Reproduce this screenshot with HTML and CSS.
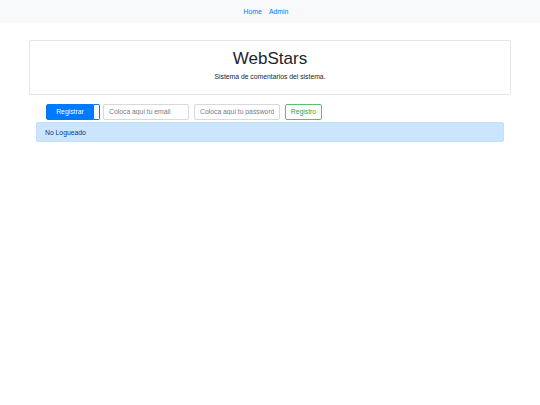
FILE: index.html
```html
<!DOCTYPE html>
<html lang="es">
<head>
<meta charset="utf-8">
<title>WebStars</title>
<link rel="stylesheet" href="styles.css">
</head>
<body>
<nav class="navbar">
  <a class="nav-link" href="#">Home</a>
  <a class="nav-link" href="#">Admin</a>
</nav>
<main class="container">
  <section class="jumbo">
    <h1 class="title">WebStars</h1>
    <p class="lead">Sistema de comentarios del sistema.</p>
  </section>
  <div class="content">
    <form class="reg-form">
      <div class="btn-group">
        <button type="button" class="btn btn-primary">Registrar</button>
        <button type="button" class="btn btn-toggle"></button>
      </div>
      <input class="input" type="text" placeholder="Coloca aqui tu email">
      <input class="input" type="password" placeholder="Coloca aqui tu password">
      <button type="button" class="btn btn-outline-success">Registro</button>
    </form>
    <div class="alert">No Logueado</div>
  </div>
</main>
</body>
</html>
```

FILE: styles.css
```css
* { box-sizing: border-box; }
html, body { margin: 0; padding: 0; }
body {
  font-family: "Liberation Sans", Arial, sans-serif;
  font-size: 6.8px;
  color: #212529;
  background: #fff;
  width: 540px;
  height: 405px;
}
.navbar {
  height: 23px;
  background: #f8f9fa;
  display: flex;
  justify-content: center;
  align-items: center;
  gap: 7px;
  padding-right: 8px;
}
.nav-link {
  color: #007bff;
  text-decoration: none;
  font-size: 6.9px;
}
.container {
  padding: 17px 29px 0 29px;
}
.jumbo {
  border: 1px solid #e6e6e6;
  border-radius: 2px;
  height: 55px;
  text-align: center;
  padding-top: 8px;
}
.title {
  margin: 0;
  font-weight: 400;
  font-size: 17px;
  line-height: 20px;
  color: #212529;
}
.lead {
  margin: 3px 0 0 0;
  font-size: 6.8px;
  line-height: 9px;
}
.content {
  padding: 8px 7px 0 7px;
  width: 482px;
}
.reg-form {
  display: flex;
  align-items: center;
  padding-left: 10px;
  height: 17px;
}
.btn-group {
  display: flex;
  height: 16px;
  margin-right: 3px;
}
.btn {
  font-family: inherit;
  font-size: 6.8px;
  height: 16px;
  padding: 0;
  border-radius: 2px;
  cursor: pointer;
  line-height: 14px;
  text-align: center;
}
.btn-primary {
  background: #007bff;
  color: #fff;
  border: 1px solid #007bff;
  width: 48px;
  border-radius: 2px 0 0 2px;
}
.btn-toggle {
  width: 6px;
  background: #fff;
  border: 1px solid #007bff;
  border-left: none;
  border-radius: 0 2px 2px 0;
}
.input {
  font-family: inherit;
  font-size: 6.8px;
  width: 86px;
  height: 16px;
  border: 1px solid #d6dadf;
  border-radius: 2px;
  padding: 0 5px;
  margin-right: 5px;
  color: #495057;
}
.input::placeholder { color: #777d83; }
.btn-outline-success {
  background: #fff;
  color: #28a745;
  border: 1px solid #5cbd72;
  width: 37px;
}
.alert {
  margin-top: 2px;
  height: 20px;
  width: 468px;
  background: #cce5ff;
  color: #004085;
  border: 1px solid #c4e0ff;
  border-radius: 2px;
  display: flex;
  align-items: center;
  padding-left: 8px;
  font-size: 6.8px;
}
```
